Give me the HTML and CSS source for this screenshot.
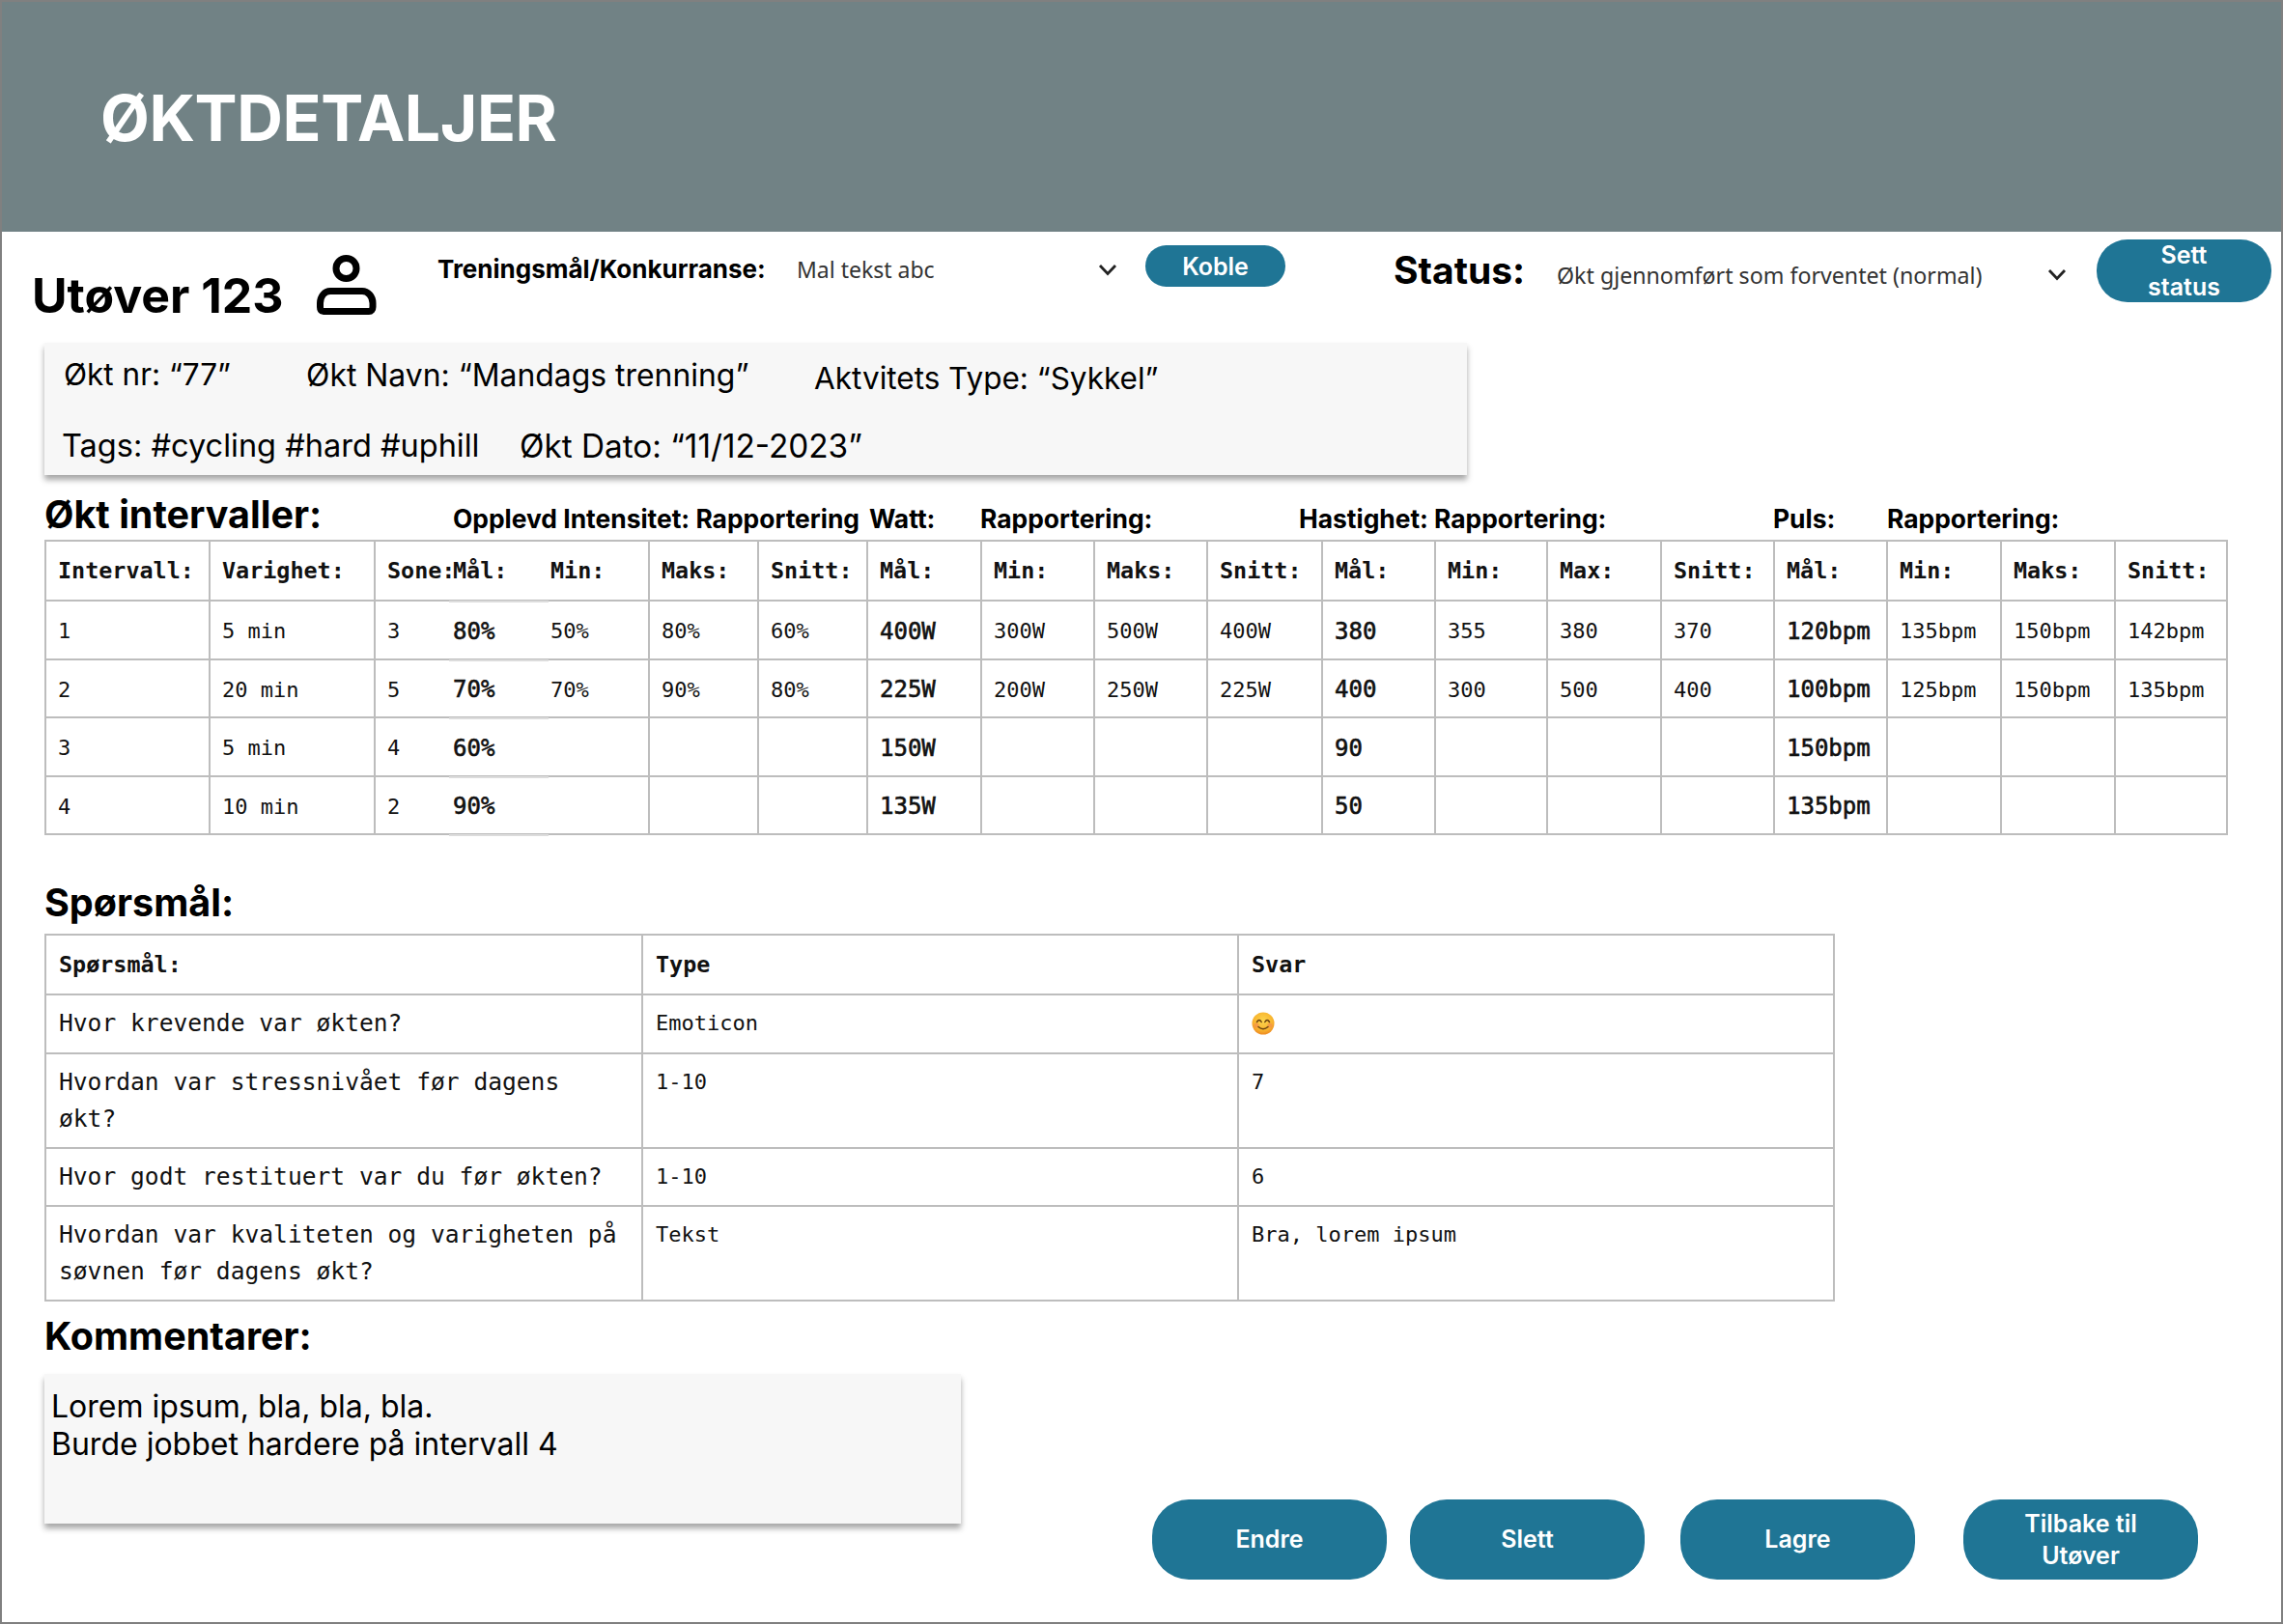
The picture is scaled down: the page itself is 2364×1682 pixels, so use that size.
FILE: index.html
```html
<!DOCTYPE html>
<html lang="no"><head>
    <meta charset="utf-8">
    <meta name="viewport" content="width=device-width, initial-scale=1.0">
    <title>Øktdetaljer</title>
    <link rel="stylesheet" href="styles.css">
</head>
<body>
<div class="page">
    <header class="top-header">
        <h1>ØKTDETALJER</h1>
    </header>

    <div class="top-row">
        <div class="athlete">
            <h2>Utøver 123</h2>
            <svg class="user-icon" viewBox="0 0 62 62" width="62" height="62" aria-hidden="true">
                <circle cx="30.500" cy="14" r="10.500" fill="none" stroke="#000" stroke-width="7"/>
                <path d="M14 37.500 H47 C53 37.500 58 43 58 50 V54 C58 56.500 56.500 58.500 54 58.500 H7 C4.500 58.500 3.500 56.500 3.500 54 V50 C3.500 43 8 37.500 14 37.500 Z" fill="none" stroke="#000" stroke-width="7" stroke-linejoin="round"/>
            </svg>
        </div>
        <div class="goal">
            <label class="goal-label">Treningsmål/Konkurranse:</label>
            <span class="goal-value">Mal tekst abc</span>
            <svg class="chevron" viewBox="0 0 20 13" width="20" height="13" aria-hidden="true"><path d="M2 2 L10 10.500 L18 2" fill="none" stroke="#222" stroke-width="2.800"/></svg>
            <button class="btn btn-small" type="button">Koble</button>
        </div>
        <div class="status">
            <span class="status-label">Status:</span>
            <span class="status-value">Økt gjennomført som forventet (normal)</span>
            <svg class="chevron" viewBox="0 0 20 13" width="20" height="13" aria-hidden="true"><path d="M2 2 L10 10.500 L18 2" fill="none" stroke="#222" stroke-width="2.800"/></svg>
            <button class="btn btn-status" type="button">Sett<br>status</button>
        </div>
    </div>

    <section class="info-card">
        <div class="info-line info-line-one">
            <span class="info-nr">Økt nr: “77”</span>
            <span class="info-navn">Økt Navn: “Mandags trenning”</span>
            <span class="info-type">Aktvitets Type: “Sykkel”</span>
        </div>
        <div class="info-line info-line-two">
            <span class="info-tags">Tags: #cycling #hard #uphill</span>
            <span class="info-dato">Økt Dato: “11/12-2023”</span>
        </div>
    </section>

    <div class="interval-heads">
        <h3>Økt intervaller:</h3>
        <span>Opplevd Intensitet: Rapportering</span>
        <span>Watt:</span>
        <span>Rapportering:</span>
        <span>Hastighet:</span>
        <span>Rapportering:</span>
        <span>Puls:</span>
        <span>Rapportering:</span>
    </div>

    <table class="grid intervals">
        <colgroup>
            <col><col><col><col><col><col><col><col><col><col>
            <col><col><col><col><col><col><col><col><col>
        </colgroup>
        <tr>
            <th>Intervall:</th><th>Varighet:</th><th class="sone">Sone:</th><th class="mal">Mål:</th><th class="min">Min:</th><th>Maks:</th><th>Snitt:</th>
            <th>Mål:</th><th>Min:</th><th>Maks:</th><th>Snitt:</th>
            <th>Mål:</th><th>Min:</th><th>Max:</th><th>Snitt:</th>
            <th>Mål:</th><th>Min:</th><th>Maks:</th><th>Snitt:</th>
        </tr>
        <tr>
            <td>1</td><td>5 min</td><td class="sone">3</td><td class="mal strong">80%</td><td class="min">50%</td><td>80%</td><td>60%</td>
            <td class="strong">400W</td><td>300W</td><td>500W</td><td>400W</td>
            <td class="strong">380</td><td>355</td><td>380</td><td>370</td>
            <td class="strong">120bpm</td><td>135bpm</td><td>150bpm</td><td>142bpm</td>
        </tr>
        <tr>
            <td>2</td><td>20 min</td><td class="sone">5</td><td class="mal strong">70%</td><td class="min">70%</td><td>90%</td><td>80%</td>
            <td class="strong">225W</td><td>200W</td><td>250W</td><td>225W</td>
            <td class="strong">400</td><td>300</td><td>500</td><td>400</td>
            <td class="strong">100bpm</td><td>125bpm</td><td>150bpm</td><td>135bpm</td>
        </tr>
        <tr>
            <td>3</td><td>5 min</td><td class="sone">4</td><td class="mal strong">60%</td><td class="min"></td><td></td><td></td>
            <td class="strong">150W</td><td></td><td></td><td></td>
            <td class="strong">90</td><td></td><td></td><td></td>
            <td class="strong">150bpm</td><td></td><td></td><td></td>
        </tr>
        <tr>
            <td>4</td><td>10 min</td><td class="sone">2</td><td class="mal strong">90%</td><td class="min"></td><td></td><td></td>
            <td class="strong">135W</td><td></td><td></td><td></td>
            <td class="strong">50</td><td></td><td></td><td></td>
            <td class="strong">135bpm</td><td></td><td></td><td></td>
        </tr>
    </table>

    <h3 class="section-title questions-title">Spørsmål:</h3>
    <table class="grid questions">
        <colgroup><col><col><col></colgroup>
        <tr><th class="q">Spørsmål:</th><th>Type</th><th>Svar</th></tr>
        <tr><td class="q">Hvor krevende var økten?</td><td>Emoticon</td><td>
            <svg class="emoji" viewBox="0 0 24 24" width="24" height="24" aria-hidden="true">
                <defs>
                    <radialGradient id="face" cx="50%" cy="38%" r="62%">
                        <stop offset="0" stop-color="#fcd54e"/>
                        <stop offset="0.700" stop-color="#f8b42e"/>
                        <stop offset="1" stop-color="#ee8a22"/>
                    </radialGradient>
                </defs>
                <circle cx="12" cy="12" r="11.500" fill="url(#face)"/>
                <circle cx="5" cy="14" r="2.600" fill="#f4894f" opacity="0.600"/>
                <circle cx="19" cy="14" r="2.600" fill="#f4894f" opacity="0.600"/>
                <path d="M5.500 10.500 Q8 6.500 10.200 10.500 M13.800 10.500 Q16 6.500 18.500 10.500" fill="none" stroke="#6b4210" stroke-width="1.500" stroke-linecap="round"/>
                <path d="M7 15.500 Q12 20 17 15.500" fill="none" stroke="#6b4210" stroke-width="1.500" stroke-linecap="round"/>
            </svg>
        </td></tr>
        <tr><td class="q">Hvordan var stressnivået før dagens økt?</td><td>1-10</td><td>7</td></tr>
        <tr><td class="q">Hvor godt restituert var du før økten?</td><td>1-10</td><td>6</td></tr>
        <tr><td class="q">Hvordan var kvaliteten og varigheten på søvnen før dagens økt?</td><td>Tekst</td><td>Bra, lorem ipsum</td></tr>
    </table>

    <h3 class="section-title comments-title">Kommentarer:</h3>
    <div class="bottom-row">
        <div class="comment-card">Lorem ipsum, bla, bla, bla.<br>Burde jobbet hardere på intervall 4</div>
        <div class="actions">
            <button class="btn btn-big" type="button">Endre</button>
            <button class="btn btn-big" type="button">Slett</button>
            <button class="btn btn-big" type="button">Lagre</button>
            <button class="btn btn-big" type="button">Tilbake til<br>Utøver</button>
        </div>
    </div>
</div>
</body></html>
```

FILE: styles.css
```css
* {
    box-sizing: border-box;
}

body {
    margin: 0;
    background-color: #fff;
    color: #000;
    font-family: Inter, "Liberation Sans", sans-serif;
}

h1, h2, h3 {
    margin: 0;
}

.page {
    width: 2364px;
    height: 1682px;
    border: 2px solid #808080;
    overflow: hidden;
}

.top-header {
    height: 238px;
    padding: 88px 0 0 102px;
    background-color: #718285;
}

.top-header h1 {
    color: #fff;
    font-size: 66px;
    line-height: 64px;
    font-weight: 700;
    letter-spacing: -0.4px;
}

/* top row */
.top-row {
    display: flex;
    height: 115px;
}

.athlete {
    display: flex;
    width: 451px;
    padding-left: 31px;
}

.athlete h2 {
    margin-top: 36px;
    font-size: 50px;
    line-height: 60px;
    font-weight: 700;
    white-space: nowrap;
}

.user-icon {
    margin: 24px 0 0 34px;
}

.goal {
    display: flex;
    align-items: flex-start;
    width: 990px;
}

.goal-label {
    margin-top: 22px;
    width: 372px;
    font-size: 26px;
    line-height: 34px;
    font-weight: 700;
    white-space: nowrap;
}

.goal-value {
    margin-top: 22px;
    width: 312px;
    font-family: "Noto Sans", sans-serif;
    font-size: 23px;
    line-height: 34px;
    color: #333;
}

.chevron {
    margin-top: 33px;
}

.btn {
    border: none;
    background-color: #1f7595;
    color: #fff;
    font-family: Inter, sans-serif;
    font-weight: 600;
}

.btn-small {
    margin: 14px 0 0 29px;
    width: 145px;
    height: 43px;
    border-radius: 22px;
    font-size: 25px;
}

.status {
    display: flex;
    align-items: flex-start;
}

.status-label {
    margin-top: 17px;
    width: 169px;
    font-size: 39px;
    line-height: 46px;
    font-weight: 700;
}

.status-value {
    margin-top: 28px;
    width: 508px;
    font-family: "Noto Sans", sans-serif;
    font-size: 23.200px;
    line-height: 34px;
    color: #333;
}

.status .chevron {
    margin-top: 38px;
}

.btn-status {
    margin: 8px 0 0 31px;
    width: 181px;
    height: 65px;
    border-radius: 32px;
    padding: 0;
    font-size: 25px;
    line-height: 33px;
}

/* cards */
.info-card {
    margin-left: 44px;
    width: 1473px;
    height: 137px;
    background-color: #f7f7f7;
    box-shadow: 0 5px 6px rgba(0, 0, 0, 0.35);
    font-size: 32px;
    line-height: 40px;
}

.info-line {
    display: flex;
}

.info-line-one {
    padding: 13px 0 0 20px;
}

.info-nr {
    width: 251px;
    font-size: 31.500px;
}

.info-navn {
    width: 526px;
    margin-top: 1px;
    font-size: 31.900px;
}

.info-type {
    margin-top: 4px;
    font-size: 31.500px;
}

.info-line-two {
    padding: 30px 0 0 18px;
}

.info-tags {
    width: 474px;
    font-size: 32.500px;
}

.info-dato {
    font-size: 33.300px;
}

/* interval table */
.interval-heads {
    display: grid;
    grid-template-columns: 423px 431px 115px 330px 140px 351px 118px 1fr;
    align-items: end;
    margin: 17px 0 0 44px;
    height: 50px;
}

.interval-heads h3 {
    padding-bottom: 3px;
    font-size: 39.500px;
    line-height: 46px;
    font-weight: 700;
    white-space: nowrap;
}

.interval-heads span {
    padding-bottom: 7px;
    font-size: 26.400px;
    line-height: 30px;
    font-weight: 700;
    white-space: nowrap;
}

.grid {
    margin-left: 44px;
    border-collapse: collapse;
    table-layout: fixed;
    font-family: "DejaVu Sans Mono", monospace;
    font-size: 22px;
    color: #111;
}

.grid th, .grid td {
    border: 2px solid #bdbdbd;
    padding: 0 0 0 12px;
    text-align: left;
    font-weight: 400;
}

.grid th {
    font-size: 23.400px;
    font-weight: 700;
}

.intervals {
    width: 2259px;
}

.intervals tr:nth-child(1) { height: 62px; }
.intervals tr:nth-child(2) { height: 61px; }
.intervals tr:nth-child(3) { height: 60px; }
.intervals tr:nth-child(4) { height: 61px; }
.intervals tr:nth-child(5) { height: 60px; }

.intervals td {
    padding-top: 2px;
}

.intervals td.strong {
    font-size: 24px;
    -webkit-text-stroke: 0.6px #111;
}

.grid .sone {
    border-right: hidden;
}

.grid .mal {
    position: relative;
    padding-left: 4px;
    border-left: hidden;
    border-right: hidden;
}

/* the Mål column sits slightly off the row lines */
.grid .mal::after {
    content: "";
    position: absolute;
    left: 0;
    right: 0;
    bottom: -3px;
    height: 2px;
    background-color: #dcdcdc;
}

.grid .min {
    padding-left: 2px;
    border-left: hidden;
}

.intervals col:nth-child(1) { width: 170px; }
.intervals col:nth-child(2) { width: 171px; }
.intervals col:nth-child(3) { width: 77px; }
.intervals col:nth-child(4) { width: 103px; }
.intervals col:nth-child(5) { width: 104px; }
.intervals col:nth-child(6) { width: 113px; }
.intervals col:nth-child(7) { width: 113px; }
.intervals col:nth-child(8) { width: 118px; }
.intervals col:nth-child(9) { width: 117px; }
.intervals col:nth-child(10) { width: 117px; }
.intervals col:nth-child(11) { width: 119px; }
.intervals col:nth-child(12) { width: 117px; }
.intervals col:nth-child(13) { width: 116px; }
.intervals col:nth-child(14) { width: 118px; }
.intervals col:nth-child(15) { width: 117px; }
.intervals col:nth-child(16) { width: 117px; }
.intervals col:nth-child(17) { width: 118px; }
.intervals col:nth-child(18) { width: 118px; }
.intervals col:nth-child(19) { width: 116px; }

/* questions */
.section-title {
    margin-left: 44px;
    font-size: 39.500px;
    line-height: 46px;
    font-weight: 700;
}

.questions-title {
    margin-top: 47px;
    margin-bottom: 9px;
}

.questions {
    width: 1852px;
    line-height: 38px;
}

.questions col:nth-child(1) { width: 618px; }
.questions col:nth-child(2) { width: 617px; }
.questions col:nth-child(3) { width: 617px; }

.questions tr:nth-child(1) { height: 62px; }
.questions tr:nth-child(2) { height: 61px; }
.questions tr:nth-child(3) { height: 98px; }
.questions tr:nth-child(4) { height: 60px; }
.questions tr:nth-child(5) { height: 98px; }

.questions th, .questions td {
    padding: 10px 13px;
    vertical-align: top;
}

.questions th {
    padding-top: 11px;
    padding-bottom: 11px;
}

.questions td.q {
    font-size: 24.600px;
}

.emoji {
    display: block;
    margin-top: 7px;
}

.comments-title {
    margin-top: 13px;
}

/* bottom */
.bottom-row {
    display: flex;
    margin: 16px 0 0 44px;
}

.comment-card {
    width: 949px;
    height: 155px;
    padding: 14px 7px;
    background-color: #f7f7f7;
    box-shadow: 0 5px 6px rgba(0, 0, 0, 0.35);
    font-size: 32px;
    line-height: 39px;
}

.actions {
    display: flex;
    margin: 130px 0 0 198px;
}

.btn-big {
    width: 243px;
    height: 83px;
    border-radius: 38px;
    padding: 0;
    font-size: 25px;
    line-height: 33px;
}

.btn-big:nth-child(2) { margin-left: 24px; }
.btn-big:nth-child(3) { margin-left: 37px; }
.btn-big:nth-child(4) { margin-left: 50px; }
```
